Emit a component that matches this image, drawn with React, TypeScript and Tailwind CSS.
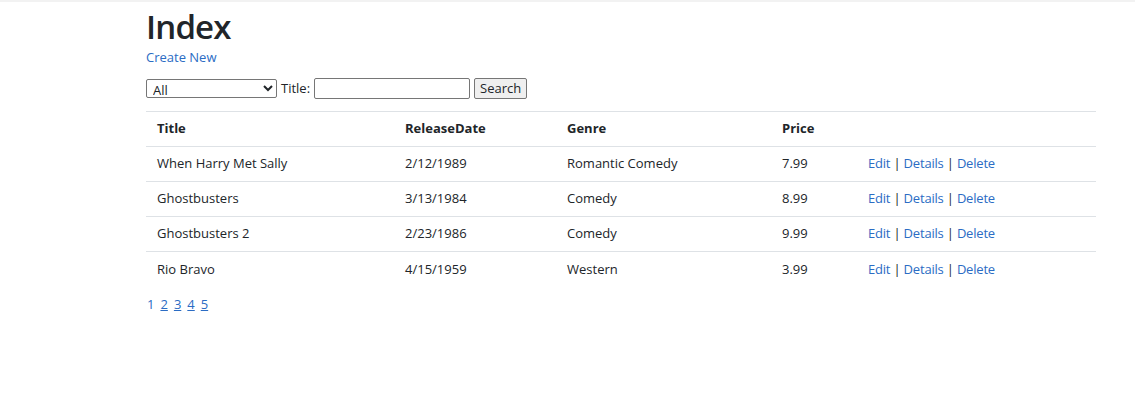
export default function App() {
  const movies = [
    { title: "When Harry Met Sally", date: "2/12/1989", genre: "Romantic Comedy", price: "7.99" },
    { title: "Ghostbusters", date: "3/13/1984", genre: "Comedy", price: "8.99" },
    { title: "Ghostbusters 2", date: "2/23/1986", genre: "Comedy", price: "9.99" },
    { title: "Rio Bravo", date: "4/15/1959", genre: "Western", price: "3.99" },
  ];

  return (
    <div className="min-h-[418px] bg-white text-[#212529] font-['Open_Sans',sans-serif] text-[13px] border-t-2 border-[#f2f2f2]">
      <div className="ml-[146px] w-[950px]">
        <h1 className="text-[33px] font-semibold leading-none pt-[8px] tracking-tight">Index</h1>
        <a href="#" className="block mt-[6px] text-[#2b6cc4] leading-[16px]">Create New</a>
        <form className="flex items-center mt-[13px] gap-[4px] text-[13px]">
          <select className="w-[131px] h-[19px] border border-[#767676] rounded-[2px] text-[13px] px-[2px] leading-none">
            <option>All</option>
          </select>
          <span>Title:</span>
          <input className="w-[156px] h-[21px] border border-[#767676] rounded-[2px]" />
          <button type="button" className="h-[21px] px-[5px] border border-[#767676] bg-[#efefef] rounded-[2px]">Search</button>
        </form>
        <table className="w-full table-fixed mt-[12px] border-collapse">
          <thead>
            <tr className="border-t border-b border-[#dee2e6] h-[35px] text-left">
              <th className="pl-[11px] w-[248px] font-bold">Title</th>
              <th className="pl-[11px] w-[162px] font-bold">ReleaseDate</th>
              <th className="pl-[11px] w-[215px] font-bold">Genre</th>
              <th className="pl-[11px] w-[86px] font-bold">Price</th>
              <th></th>
            </tr>
          </thead>
          <tbody>
            {movies.map((m, i) => (
              <tr key={m.title} className={`h-[35px] ${i < movies.length - 1 ? "border-b border-[#dee2e6]" : ""}`}>
                <td className="pl-[11px]">{m.title}</td>
                <td className="pl-[11px]">{m.date}</td>
                <td className="pl-[11px]">{m.genre}</td>
                <td className="pl-[11px]">{m.price}</td>
                <td className="pl-[11px] tracking-[-0.2px]">
                  <a href="#" className="text-[#2b6cc4]">Edit</a> |{" "}
                  <a href="#" className="text-[#2b6cc4]">Details</a> |{" "}
                  <a href="#" className="text-[#2b6cc4]">Delete</a>
                </td>
              </tr>
            ))}
          </tbody>
        </table>
        <div className="flex gap-[6px] mt-[8px] ml-[1px] text-[#2b6cc4]">
          <span>1</span>
          {[2, 3, 4, 5].map((n) => (
            <a key={n} href="#" className="underline">{n}</a>
          ))}
        </div>
      </div>
    </div>
  );
}
